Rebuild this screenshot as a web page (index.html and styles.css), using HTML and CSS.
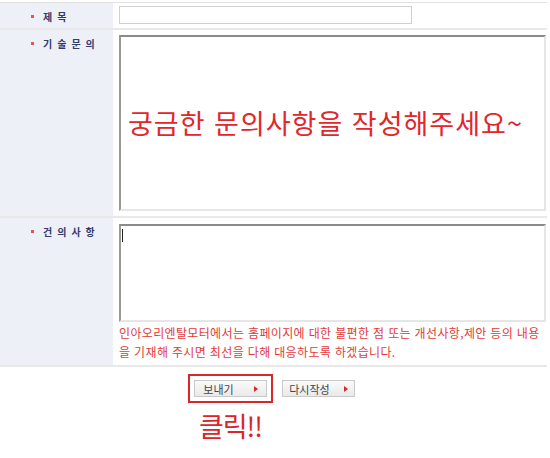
FILE: index.html
```html
<!DOCTYPE html>
<html lang="ko">
<head>
    <meta charset="UTF-8">
    <meta name="viewport" content="width=device-width, initial-scale=1.0">
    <title>기술문의</title>
    <link rel="stylesheet" href="styles.css">
</head>
<body>
    <form class="inquiry">
        <div class="row row-title">
            <div class="label"><span class="dot"></span>제목</div>
            <div class="field">
                <input type="text" class="title-input">
            </div>
        </div>

        <div class="row row-question">
            <div class="label"><span class="dot"></span>기술문의</div>
            <div class="field">
                <div class="area-wrap">
                    <textarea class="area area-big"></textarea>
                    <span class="hint">궁금한 문의사항을 작성해주세요~</span>
                </div>
            </div>
        </div>

        <div class="row row-suggest">
            <div class="label"><span class="dot"></span>건의사항</div>
            <div class="field">
                <div class="area-wrap">
                    <textarea class="area area-small"></textarea>
                    <span class="caret"></span>
                </div>
                <p class="notice">인아오리엔탈모터에서는 홈페이지에 대한 불편한 점 또는 개선사항,제안 등의 내용을 기재해 주시면 최선을 다해 대응하도록 하겠습니다.</p>
            </div>
        </div>

        <div class="buttons">
            <div class="send-col">
                <span class="highlight">
                    <button type="button" class="btn">보내기<span class="arrow"></span></button>
                </span>
                <span class="click">클릭!!</span>
            </div>
            <button type="reset" class="btn btn-reset">다시작성<span class="arrow"></span></button>
        </div>
    </form>
</body>
</html>
```

FILE: styles.css
```css
body {
    margin: 0;
    padding: 2px 0 0;
    background: #fff;
    font-family: 'Noto Sans CJK KR', 'Noto Sans', sans-serif;
    color: #333;
}

.inquiry {
    width: 547px;
    border-top: 1px solid #e2e2e2;
}

.row {
    display: flex;
    border-bottom: 2px solid #e9e9e9;
}

.label {
    width: 113px;
    flex-shrink: 0;
    box-sizing: border-box;
    padding: 8px 0 0 31px;
    background-color: #eef0f8;
    font-size: 10px;
    line-height: 12px;
    font-weight: bold;
    letter-spacing: 5px;
    color: #343a6a;
    display: flex;
    align-items: flex-start;
}

.dot {
    width: 3px;
    height: 3px;
    margin: 4px 9px 0 0;
    background-color: #e05656;
    flex-shrink: 0;
}

.field {
    flex: 1;
    padding: 3px 1px 4px 6px;
}

.row-question .field {
    padding-top: 5px;
    padding-bottom: 5px;
}

.row-suggest .field {
    padding-top: 6px;
    padding-bottom: 4px;
}

.title-input {
    display: block;
    width: 293px;
    height: 18px;
    box-sizing: border-box;
    border: 1px solid #cfcfcf;
    padding: 0 4px;
    margin: 0;
}

.area-wrap {
    position: relative;
}

.area {
    display: block;
    width: 100%;
    box-sizing: border-box;
    margin: 0;
    resize: none;
    border: 2px solid #e6e6e6;
    border-top-color: #8a8a8a;
    border-left-color: #9a9a9a;
    background: #fff;
}

.area-big {
    height: 176px;
}

.area-small {
    height: 98px;
}

.hint {
    position: absolute;
    left: 9px;
    top: 73px;
    font-size: 27px;
    line-height: 30px;
    letter-spacing: 1px;
    color: #e2262a;
    white-space: nowrap;
}

.caret {
    position: absolute;
    left: 3px;
    top: 5px;
    width: 1px;
    height: 13px;
    background-color: #222;
}

.notice {
    margin: 0;
    padding-top: 1px;
    font-size: 12px;
    line-height: 19px;
    color: #e23a3a;
    letter-spacing: 0.35px;
}

.buttons {
    display: flex;
    justify-content: center;
    align-items: flex-start;
    gap: 9px;
    width: 547px;
    padding-top: 7px;
    padding-right: 4px;
    box-sizing: border-box;
}

.send-col {
    display: flex;
    flex-direction: column;
    align-items: center;
}

.highlight {
    display: block;
    padding: 4px;
    border: 2px solid #d8262a;
}

.btn {
    display: flex;
    align-items: center;
    justify-content: center;
    width: 73px;
    height: 17px;
    padding: 0;
    border: 1px solid #c9c9c9;
    background: linear-gradient(#fbfbfb, #e9e9e9);
    font-family: 'Noto Sans CJK KR', sans-serif;
    font-size: 11px;
    color: #444;
    cursor: pointer;
}

.btn-reset {
    margin-top: 6px;
}

.arrow {
    width: 0;
    height: 0;
    margin-left: 20px;
    border-left: 4px solid #d8262a;
    border-top: 3px solid transparent;
    border-bottom: 3px solid transparent;
}

.btn-reset .arrow {
    margin-left: 14px;
}

.click {
    margin-top: 6px;
    font-size: 27px;
    line-height: 34px;
    color: #d8262a;
    letter-spacing: -1px;
}
```
